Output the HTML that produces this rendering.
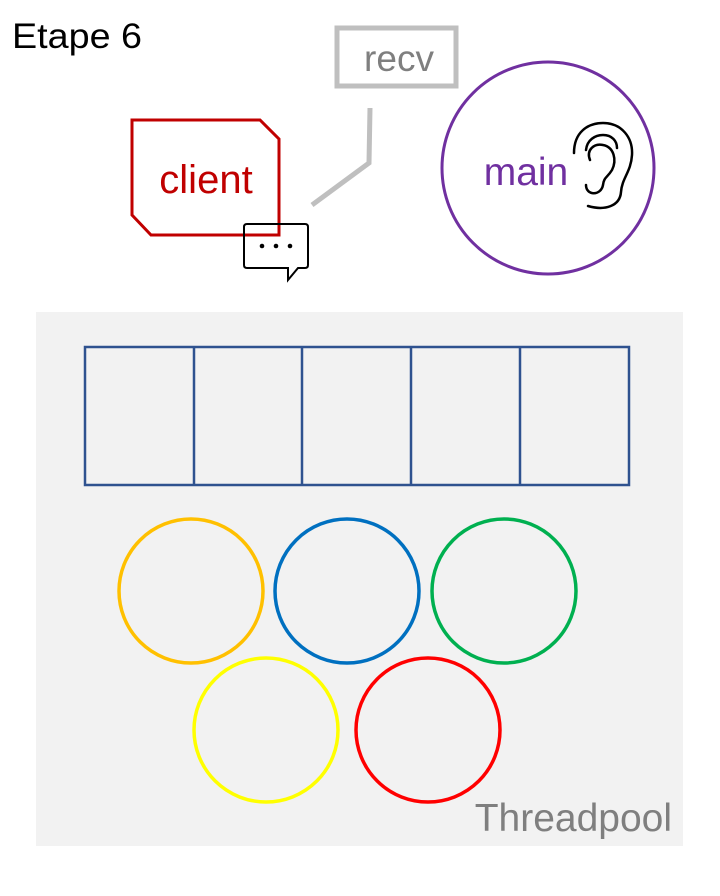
<!DOCTYPE html>
<html><head><style>
body{margin:0;background:#fff;width:720px;height:891px;overflow:hidden}
svg text{font-family:"Liberation Sans",sans-serif}
</style></head><body>
<svg width="720" height="891" viewBox="0 0 720 891">
<text x="12" y="48" font-size="35" fill="#000" textLength="130" lengthAdjust="spacingAndGlyphs">Etape 6</text>
<rect x="337" y="28" width="119" height="58" fill="none" stroke="#bfbfbf" stroke-width="5"/>
<text x="399" y="71" font-size="37" fill="#7f7f7f" text-anchor="middle">recv</text>
<polyline points="370,108 369,163 312,205" fill="none" stroke="#bfbfbf" stroke-width="5"/>
<polygon points="132,120 260,120 279,139 279,235 151,235 132,215" fill="none" stroke="#c00000" stroke-width="3"/>
<text x="206" y="193" font-size="40" fill="#c00000" text-anchor="middle">client</text>
<path d="M247,224 H305 Q308,224 308,227 V265 Q308,268 305,268 H298 L288,280 V268 H247 Q244,268 244,265 V227 Q244,224 247,224 Z" fill="none" stroke="#000" stroke-width="2"/>
<circle cx="262" cy="246" r="2.3"/><circle cx="276" cy="246" r="2.3"/><circle cx="290" cy="246" r="2.3"/>
<circle cx="548" cy="168" r="106" fill="none" stroke="#7030a0" stroke-width="3"/>
<text x="526" y="185" font-size="39" fill="#7030a0" text-anchor="middle">main</text>
<g fill="none" stroke="#000" stroke-width="2.5" stroke-linecap="round">
<path d="M574,153 C574,132 588,123 603,123 C622,123 633,138 632,155 C631,172 622,178 621,192 C620,206 605,211 588,206"/>
<path d="M586,150 C587,140 595,135 603,135 C612,135 617,141 617,148"/>
<path d="M590,160 C586,150 594,143 603,145 C614,147 617,160 612,170 C607,178 604,177 603,185 C601,196 586,196 586,185"/>
</g>
<rect x="36" y="312" width="647" height="534" fill="#f2f2f2"/>
<g fill="none" stroke="#2f528f" stroke-width="2.5">
<rect x="85" y="347" width="544" height="138"/>
<line x1="194" y1="347" x2="194" y2="485"/>
<line x1="302" y1="347" x2="302" y2="485"/>
<line x1="411" y1="347" x2="411" y2="485"/>
<line x1="520" y1="347" x2="520" y2="485"/>
</g>
<g fill="none" stroke-width="3.5">
<circle cx="191" cy="591" r="72" stroke="#ffc000"/>
<circle cx="347" cy="591" r="72" stroke="#0070c0"/>
<circle cx="504" cy="591" r="72" stroke="#00b050"/>
<circle cx="266" cy="730" r="72" stroke="#ffff00"/>
<circle cx="428" cy="730" r="72" stroke="#ff0000"/>
</g>
<text x="672" y="831" font-size="39" fill="#7f7f7f" text-anchor="end">Threadpool</text>
</svg>
</body></html>
